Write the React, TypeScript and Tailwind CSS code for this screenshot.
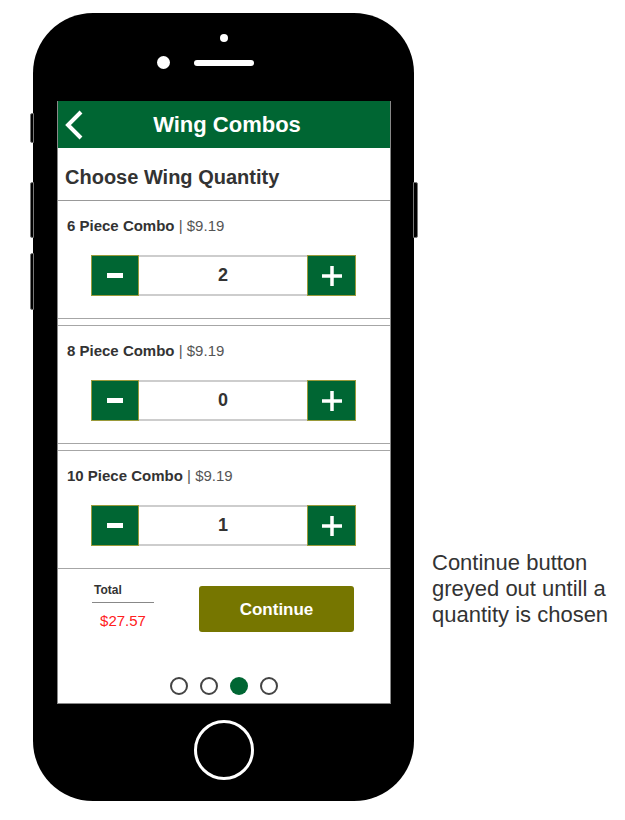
import React from "react";

type Combo = {
  name: string;
  price: string;
  qty: number;
};

const combos: Combo[] = [
  { name: "6 Piece Combo", price: "$9.19", qty: 2 },
  { name: "8 Piece Combo", price: "$9.19", qty: 0 },
  { name: "10 Piece Combo", price: "$9.19", qty: 1 },
];

const Stepper = ({ qty }: { qty: number }): JSX.Element => {
  return (
    <div className="ml-[33px] mt-[20px] flex h-[41px] w-[265px]">
      <button className="flex w-[48px] items-center justify-center border border-[#9a9a3a] bg-[#006633]">
        <span className="block h-[5px] w-[16px] bg-white" />
      </button>
      <div className="flex flex-1 items-center justify-center border-y-2 border-[#cdcdcd] text-[18px] font-bold text-[#333]">
        {qty}
      </div>
      <button className="flex w-[49px] items-center justify-center border border-[#9a9a3a] bg-[#006633]">
        <svg width="20" height="20" viewBox="0 0 20 20">
          <path d="M10 0v20M0 10h20" stroke="white" strokeWidth="3.5" />
        </svg>
      </button>
    </div>
  );
};

const ComboRow = ({ combo, first }: { combo: Combo; first: boolean }) => {
  return (
    <div
      className={
        first
          ? "h-[118px] border-b border-[#a6a6a6]"
          : "mt-[6px] h-[119px] border-y border-[#a6a6a6]"
      }
    >
      <p className="pl-[9px] pt-[16px] text-[15px] leading-[18px] text-[#333]">
        <span className="font-bold">{combo.name}</span>
        <span className="text-[#555]"> | {combo.price}</span>
      </p>
      <Stepper qty={combo.qty} />
    </div>
  );
};

const Phone = (): JSX.Element => {
  return (
    <div className="relative flex h-[788px] w-[381px] flex-col rounded-[60px] bg-black pl-[24px] pr-[23px]">
      {/* side buttons */}
      <span className="absolute left-[-3px] top-[100px] h-[30px] w-[4px] rounded-l-[2px] border border-[#777] bg-black" />
      <span className="absolute left-[-3px] top-[169px] h-[56px] w-[4px] rounded-l-[2px] border border-[#777] bg-black" />
      <span className="absolute left-[-3px] top-[240px] h-[57px] w-[4px] rounded-l-[2px] border border-[#777] bg-black" />
      <span className="absolute right-[-4px] top-[169px] h-[56px] w-[5px] rounded-r-[2px] border border-[#777] bg-black" />

      <div className="flex h-[88px] flex-col items-center">
        <span className="mt-[21px] h-[8px] w-[8px] rounded-full bg-white" />
        <div className="mr-[38px] mt-[14px] flex items-center gap-[24px]">
          <span className="h-[13px] w-[13px] rounded-full bg-white" />
          <span className="h-[6px] w-[60px] rounded-full bg-white" />
        </div>
      </div>

      <div className="flex h-[603px] flex-col border-x border-b border-[#888] bg-white">
        <div className="flex h-[47px] items-center bg-[#006633] pl-[6px] pr-[20px]">
          <svg width="20" height="32" viewBox="0 0 20 32">
            <polyline
              points="17,3 4,16 17,29"
              fill="none"
              stroke="white"
              strokeWidth="4"
            />
          </svg>
          <h1 className="flex-1 text-center text-[22px] font-bold text-white">
            Wing Combos
          </h1>
        </div>
        <div className="flex h-[53px] items-center border-b border-[#999] pl-[7px] pt-[6px]">
          <h2 className="text-[20px] font-bold text-[#333]">
            Choose Wing Quantity
          </h2>
        </div>
        {combos.map((c, i) => (
          <ComboRow combo={c} first={i === 0} key={c.name} />
        ))}
        <div className="flex flex-1 flex-col">
          <div className="flex items-start">
            <div className="ml-[34px] mt-[14px] w-[62px]">
              <p className="border-b border-[#888] pb-[5px] pl-[2px] text-[12px] font-bold leading-[14px] text-[#333]">
                Total
              </p>
              <p className="mt-[9px] text-center text-[15px] leading-[18px] text-[#ff2020]">
                $27.57
              </p>
            </div>
            <button className="ml-[45px] mt-[17px] h-[46px] w-[155px] rounded-[3px] bg-[#767600] pt-[2px] text-[17px] font-bold text-white">
              Continue
            </button>
          </div>
          <div className="mb-[8px] mt-auto flex justify-center gap-[12px]">
            <span className="h-[18px] w-[18px] rounded-full border-2 border-[#444]" />
            <span className="h-[18px] w-[18px] rounded-full border-2 border-[#444]" />
            <span className="h-[18px] w-[18px] rounded-full bg-[#006633]" />
            <span className="h-[18px] w-[18px] rounded-full border-2 border-[#444]" />
          </div>
        </div>
      </div>

      <div className="flex flex-1 justify-center">
        <span className="mt-[16px] h-[60px] w-[60px] rounded-full border-[3px] border-white" />
      </div>
    </div>
  );
};

const App = (): JSX.Element => {
  return (
    <div className="flex min-h-screen items-start bg-white pl-[33px] pt-[13px] font-['Liberation_Sans',Arial,sans-serif]">
      <Phone />
      <p className="ml-[18px] mt-[537px] text-[22px] leading-[26px] text-[#333]">
        Continue button
        <br />
        greyed out untill a
        <br />
        quantity is chosen
      </p>
    </div>
  );
};

export default App;
